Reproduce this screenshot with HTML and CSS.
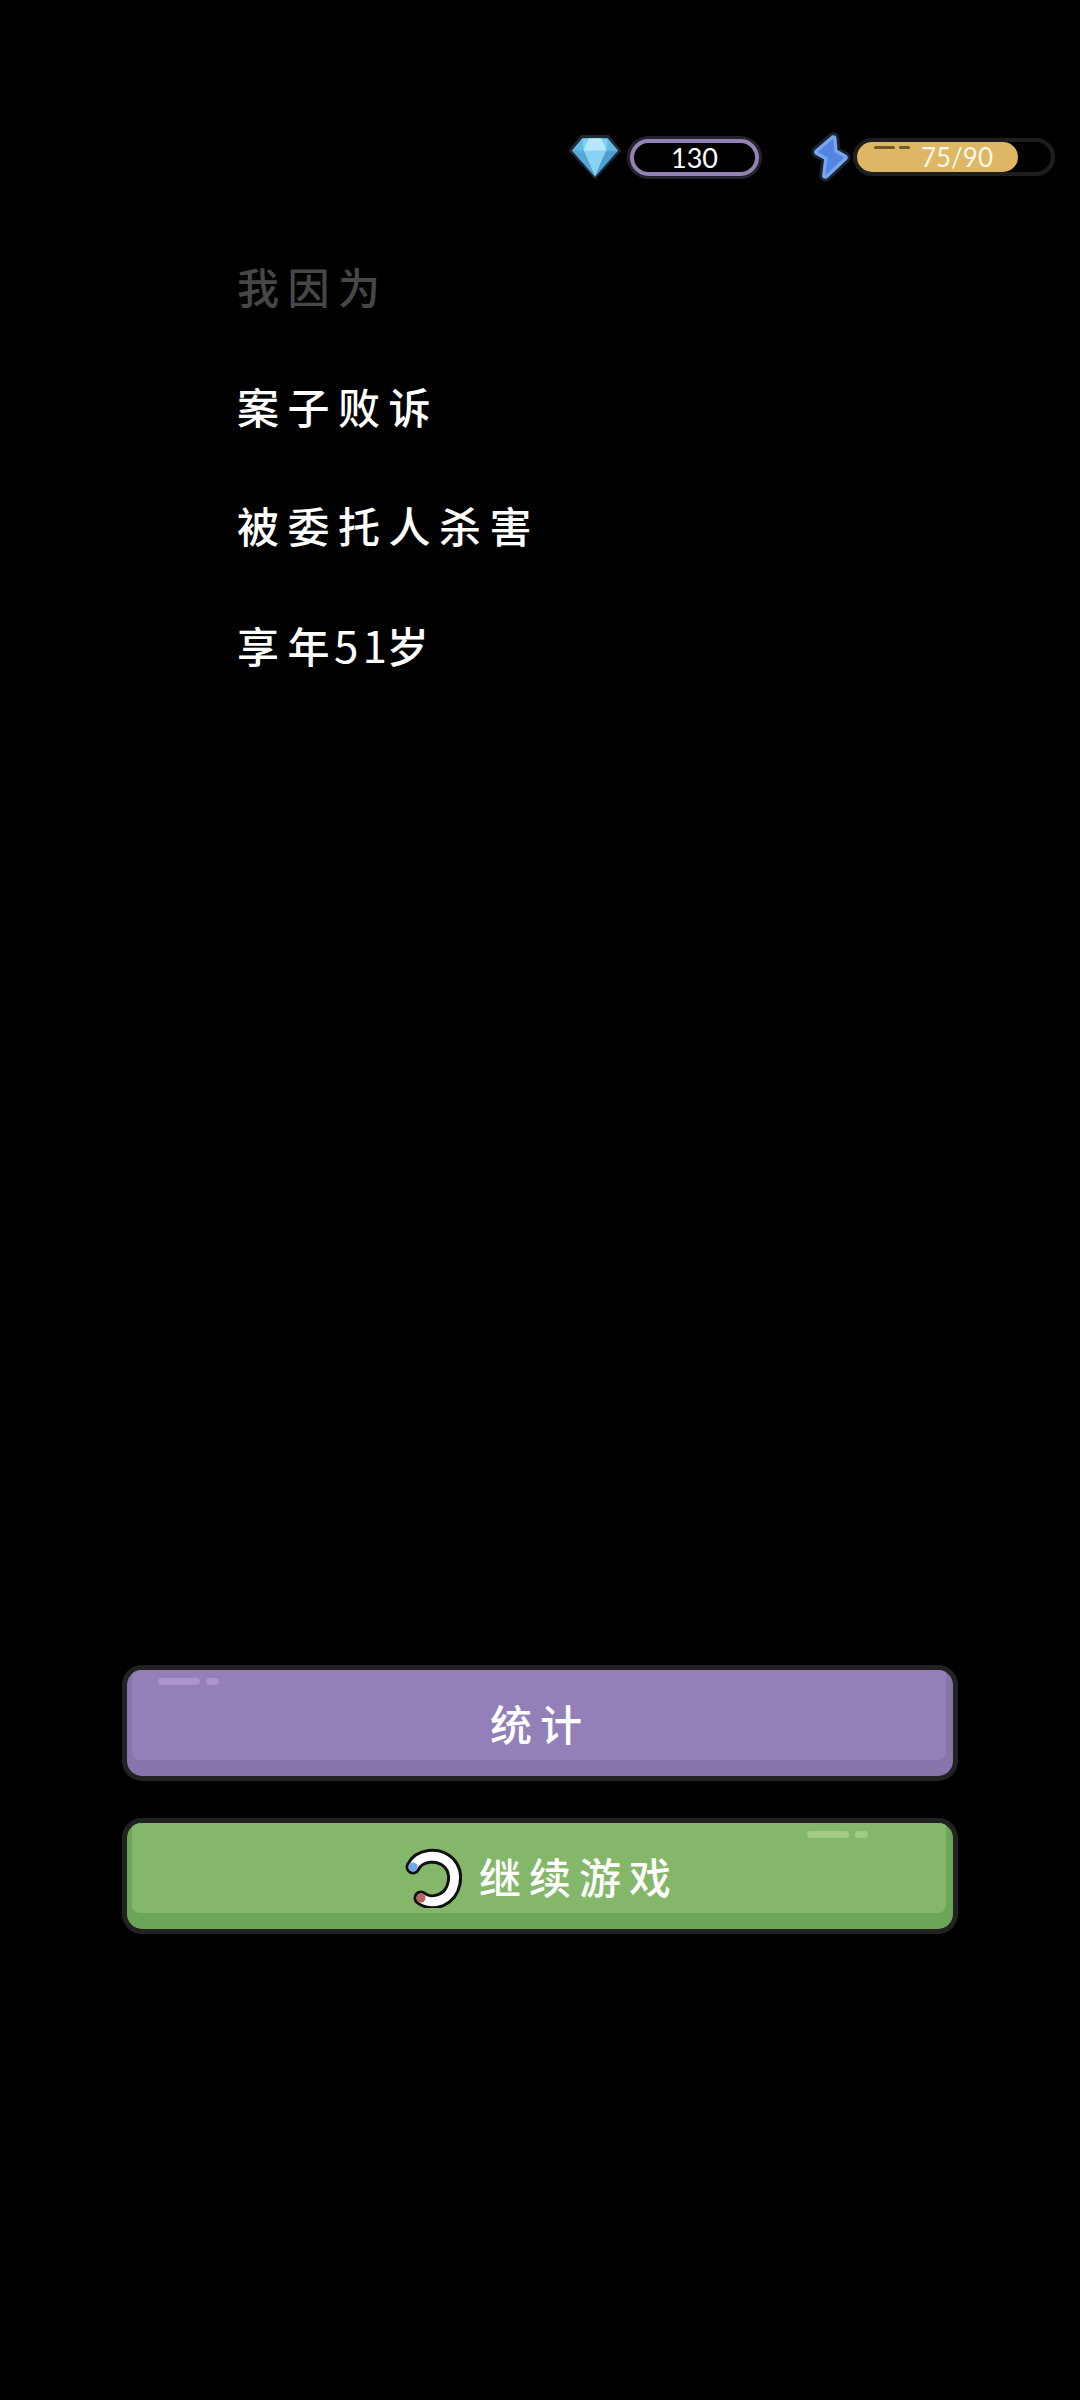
FILE: index.html
```html
<!DOCTYPE html>
<html lang="zh-CN">
<head>
<meta charset="utf-8">
<title>结局</title>
<link rel="stylesheet" href="styles.css">
</head>
<body>
<main class="page">
  <header class="status">
    <div class="stat gems">
      <svg class="gem" viewBox="0 0 52 46" width="56" height="48">
        <path d="M13 3H39L50 17L26 43L2 17Z" fill="#1f2a35" stroke="#1f2a35" stroke-width="2" stroke-linejoin="round"/>
        <path d="M14 5H38L48 17H4Z" fill="#7fd0f2"/>
        <path d="M4 17H15L26 42Z" fill="#57a9dc"/>
        <path d="M48 17H37L26 42Z" fill="#4f9fd6"/>
        <path d="M15 17H37L26 42Z" fill="#86d3f3"/>
        <path d="M20 5H32L37 17H15Z" fill="#b5e8fa"/>
        <path d="M14 5L15 17H4Z" fill="#63b8e4"/>
        <path d="M38 5L37 17H48Z" fill="#63b8e4"/>
      </svg>
      <div class="gem-pill">130</div>
    </div>
    <div class="stat energy">
      <svg class="bolt" viewBox="12 10 36 45" width="40" height="50">
        <path d="M32 16L18 28L27 33L25 49L42 33L33 28Z" fill="#5b8fe6" stroke="#1d2430" stroke-width="11" stroke-linejoin="round"/>
        <path d="M32 16L18 28L27 33L25 49L42 33L33 28Z" fill="#5b8fe6" stroke="#7aa6ef" stroke-width="6" stroke-linejoin="round"/>
        <path d="M32 16L18 28L27 33L25 49L42 33L33 28Z" fill="#5286e2"/>
      </svg>
      <div class="energy-bar">
        <div class="energy-fill" style="width:83%">
          <span class="energy-gloss"></span><span class="energy-gloss short"></span>
        </div>
        <span class="energy-text">75/90</span>
      </div>
    </div>
  </header>

  <section class="story">
    <p class="line faded">我因为</p>
    <p class="line">案子败诉</p>
    <p class="line">被委托人杀害</p>
    <p class="line">享年<span class="digits">51</span>岁</p>
  </section>

  <section class="actions">
    <button class="btn purple" type="button">
      <span class="gloss gloss-left"></span>
      <span class="label">统计</span>
    </button>
    <button class="btn green" type="button">
      <span class="gloss gloss-right"></span>
      <span class="label">
        <svg class="ring" viewBox="0 0 60 60" width="60" height="60">
          <path d="M11 19C17 7 36 4 47 15C57 26 53 46 39 52C32 55 24 54 19 50" fill="none" stroke="#111" stroke-width="15" stroke-linecap="round"/>
          <path d="M11 19C17 7 36 4 47 15C57 26 53 46 39 52C32 55 24 54 19 50" fill="none" stroke="#fff" stroke-width="9" stroke-linecap="round"/>
          <circle cx="11" cy="19" r="4.5" fill="#6fa6e8"/>
          <circle cx="19" cy="50" r="4.5" fill="#b8625f"/>
        </svg>
        继续游戏
      </span>
    </button>
  </section>
</main>
</body>
</html>
```
FILE: styles.css
```css
* { box-sizing: border-box; }
html, body { margin: 0; background: #000; }
body { font-family: "Noto Sans CJK SC", "Noto Sans", sans-serif; color: #fff; }
.page { width: 1080px; height: 2400px; display: flex; flex-direction: column; padding: 132px 25px 466px 0; }

.status { display: flex; justify-content: flex-end; align-items: center; height: 50px; }
.stat { display: flex; align-items: center; }
.gems { gap: 7px; margin-right: 52px; }
.energy { gap: 2px; }
.gem { display: block; }
.bolt { display: block; }

.gem-pill { width: 129px; height: 37px; border: 4px solid #9283b4; box-shadow: 0 0 0 3px #25222c; border-radius: 19px; display: flex; align-items: center; justify-content: center; font: 400 27px "Lato", sans-serif; background: #000; }

.energy-bar { position: relative; width: 202px; height: 38px; border: 4px solid #1e1e1e; border-radius: 19px; background: #000; }
.energy-fill { position: relative; height: 100%; background: #deb765; border-radius: 15px; }
.energy-gloss { position: absolute; left: 17px; top: 4px; width: 21px; height: 3px; background: #6f5a2b; border-radius: 2px; }
.energy-gloss.short { left: 42px; width: 11px; }
.energy-text { position: absolute; left: 60px; top: 0; width: 80px; height: 30px; display: flex; align-items: center; justify-content: center; font: 400 26px "Lato", sans-serif; color: #fbf6e6; }

.story { display: flex; flex-direction: column; gap: 0; margin: 44px 0 0 237px; }
.line { margin: 0; height: 119.5px; line-height: 119.5px; font-size: 42px; font-weight: 500; letter-spacing: 8.5px; }
.faded { color: #474747; }
.digits { font-size: 44px; letter-spacing: 4px; font-weight: 400; margin: 0 -4px 0 -4px; }

.actions { margin: auto 0 0 122px; width: 836px; display: flex; flex-direction: column; gap: 37px; }
.btn { position: relative; width: 100%; height: 116px; padding: 0; border: 5px solid #222; border-radius: 20px; font: inherit; color: #fff; display: flex; align-items: center; justify-content: center; overflow: hidden; }
.btn::before { content: ""; position: absolute; left: 5px; right: 7px; top: 0; bottom: 16px; border-radius: 0 0 8px 8px; }
.purple { background: #8575aa; }
.purple::before { background: #9480b9; }
.green { background: #6da557; }
.green::before { background: #84b769; }
.label { position: relative; display: flex; align-items: center; font-size: 42px; font-weight: 500; letter-spacing: 8px; line-height: 60px; }
.ring { display: block; margin: 3px 17px 0 1px; }
.gloss { position: absolute; top: 8px; height: 7px; border-radius: 4px; z-index: 1; }
.gloss::after { content: ""; position: absolute; top: 0; left: calc(100% + 6px); width: 13px; height: 7px; border-radius: 4px; background: inherit; }
.gloss-left { left: 31px; width: 42px; background: #a994cc; }
.gloss-right { left: 680px; width: 42px; background: #9fcb84; }
```
